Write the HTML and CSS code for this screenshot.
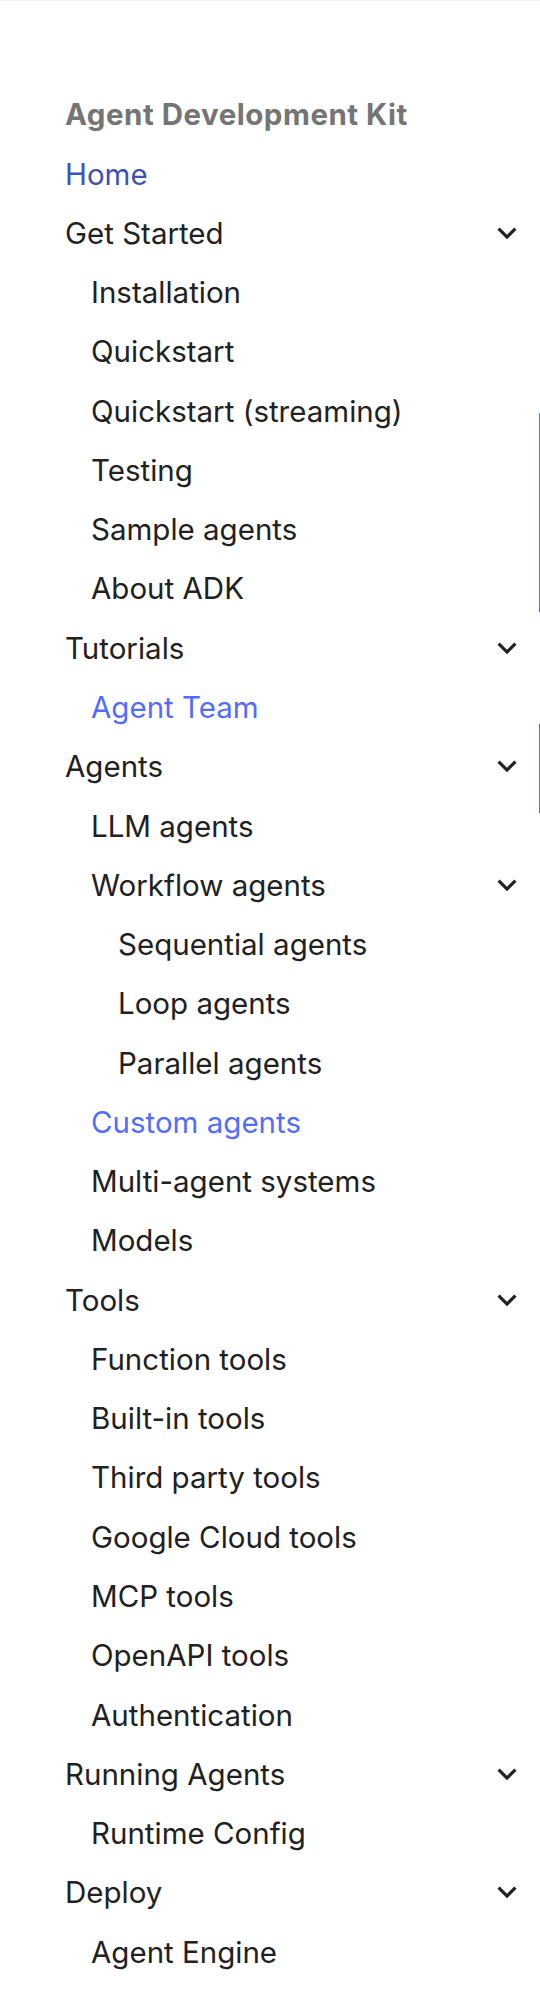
FILE: index.html
```html
<!DOCTYPE html>
<html lang="en">
<head>
<meta charset="utf-8">
<title>Agent Development Kit</title>
<link rel="stylesheet" href="styles.css">
</head>
<body>
<nav class="sidebar">
  <div class="title">Agent Development Kit</div>
  <ul class="list">
    <li><a class="link l0 active">Home</a></li>
    <li><a class="link l0">Get Started<svg class="chev" viewBox="0 0 24 24"><path d="M7.41 8.58 12 13.17l4.59-4.59L18 10l-6 6-6-6 1.41-1.42Z"/></svg></a>
      <ul class="list">
        <li><a class="link l1">Installation</a></li>
        <li><a class="link l1">Quickstart</a></li>
        <li><a class="link l1">Quickstart (streaming)</a></li>
        <li><a class="link l1">Testing</a></li>
        <li><a class="link l1">Sample agents</a></li>
        <li><a class="link l1">About ADK</a></li>
      </ul>
    </li>
    <li><a class="link l0">Tutorials<svg class="chev" viewBox="0 0 24 24"><path d="M7.41 8.58 12 13.17l4.59-4.59L18 10l-6 6-6-6 1.41-1.42Z"/></svg></a>
      <ul class="list">
        <li><a class="link l1 hover">Agent Team</a></li>
      </ul>
    </li>
    <li><a class="link l0">Agents<svg class="chev" viewBox="0 0 24 24"><path d="M7.41 8.58 12 13.17l4.59-4.59L18 10l-6 6-6-6 1.41-1.42Z"/></svg></a>
      <ul class="list">
        <li><a class="link l1">LLM agents</a></li>
        <li><a class="link l1">Workflow agents<svg class="chev" viewBox="0 0 24 24"><path d="M7.41 8.58 12 13.17l4.59-4.59L18 10l-6 6-6-6 1.41-1.42Z"/></svg></a>
          <ul class="list">
            <li><a class="link l2">Sequential agents</a></li>
            <li><a class="link l2">Loop agents</a></li>
            <li><a class="link l2">Parallel agents</a></li>
          </ul>
        </li>
        <li><a class="link l1 hover">Custom agents</a></li>
        <li><a class="link l1">Multi-agent systems</a></li>
        <li><a class="link l1">Models</a></li>
      </ul>
    </li>
    <li><a class="link l0">Tools<svg class="chev" viewBox="0 0 24 24"><path d="M7.41 8.58 12 13.17l4.59-4.59L18 10l-6 6-6-6 1.41-1.42Z"/></svg></a>
      <ul class="list">
        <li><a class="link l1">Function tools</a></li>
        <li><a class="link l1">Built-in tools</a></li>
        <li><a class="link l1">Third party tools</a></li>
        <li><a class="link l1">Google Cloud tools</a></li>
        <li><a class="link l1">MCP tools</a></li>
        <li><a class="link l1">OpenAPI tools</a></li>
        <li><a class="link l1">Authentication</a></li>
      </ul>
    </li>
    <li><a class="link l0">Running Agents<svg class="chev" viewBox="0 0 24 24"><path d="M7.41 8.58 12 13.17l4.59-4.59L18 10l-6 6-6-6 1.41-1.42Z"/></svg></a>
      <ul class="list">
        <li><a class="link l1">Runtime Config</a></li>
      </ul>
    </li>
    <li><a class="link l0">Deploy<svg class="chev" viewBox="0 0 24 24"><path d="M7.41 8.58 12 13.17l4.59-4.59L18 10l-6 6-6-6 1.41-1.42Z"/></svg></a>
      <ul class="list">
        <li><a class="link l1">Agent Engine</a></li>
      </ul>
    </li>
  </ul>
  <span class="track track-a"></span>
  <span class="track track-b"></span>
</nav>
</body>
</html>
```

FILE: styles.css
```css
html, body {
  margin: 0;
  padding: 0;
  background: #ffffff;
}

body {
  font-family: Inter, "Noto Sans", sans-serif;
  color: #212121;
}

.sidebar {
  position: relative;
  width: 540px;
  min-height: 1999px;
  box-sizing: border-box;
  padding-top: 83px;
  border-top: 1px solid #f4f4f4;
}

.title {
  height: 60px;
  display: flex;
  align-items: center;
  padding-left: 65px;
  font-size: 29.5px;
  font-weight: 700;
  letter-spacing: 0.5px;
  color: #757575;
  white-space: nowrap;
}

.list {
  list-style: none;
  margin: 0;
  padding: 0;
}

.link {
  display: flex;
  align-items: center;
  justify-content: space-between;
  height: 59.28px;
  padding-right: 14px;
  font-size: 29.5px;
  color: #212121;
  white-space: nowrap;
}

.l0 { padding-left: 65px; }
.l1 { padding-left: 91px; }
.l2 { padding-left: 118px; }

.active { color: #4051b5; }
.hover { color: #526cfe; }

.chev {
  width: 38px;
  height: 38px;
  flex: none;
  fill: #212121;
}

.track {
  position: absolute;
  right: 0;
  width: 1px;
  background: #5b6bd6;
}
.track-a { top: 412px; height: 199px; }
.track-b { top: 723px; height: 89px; }
```
